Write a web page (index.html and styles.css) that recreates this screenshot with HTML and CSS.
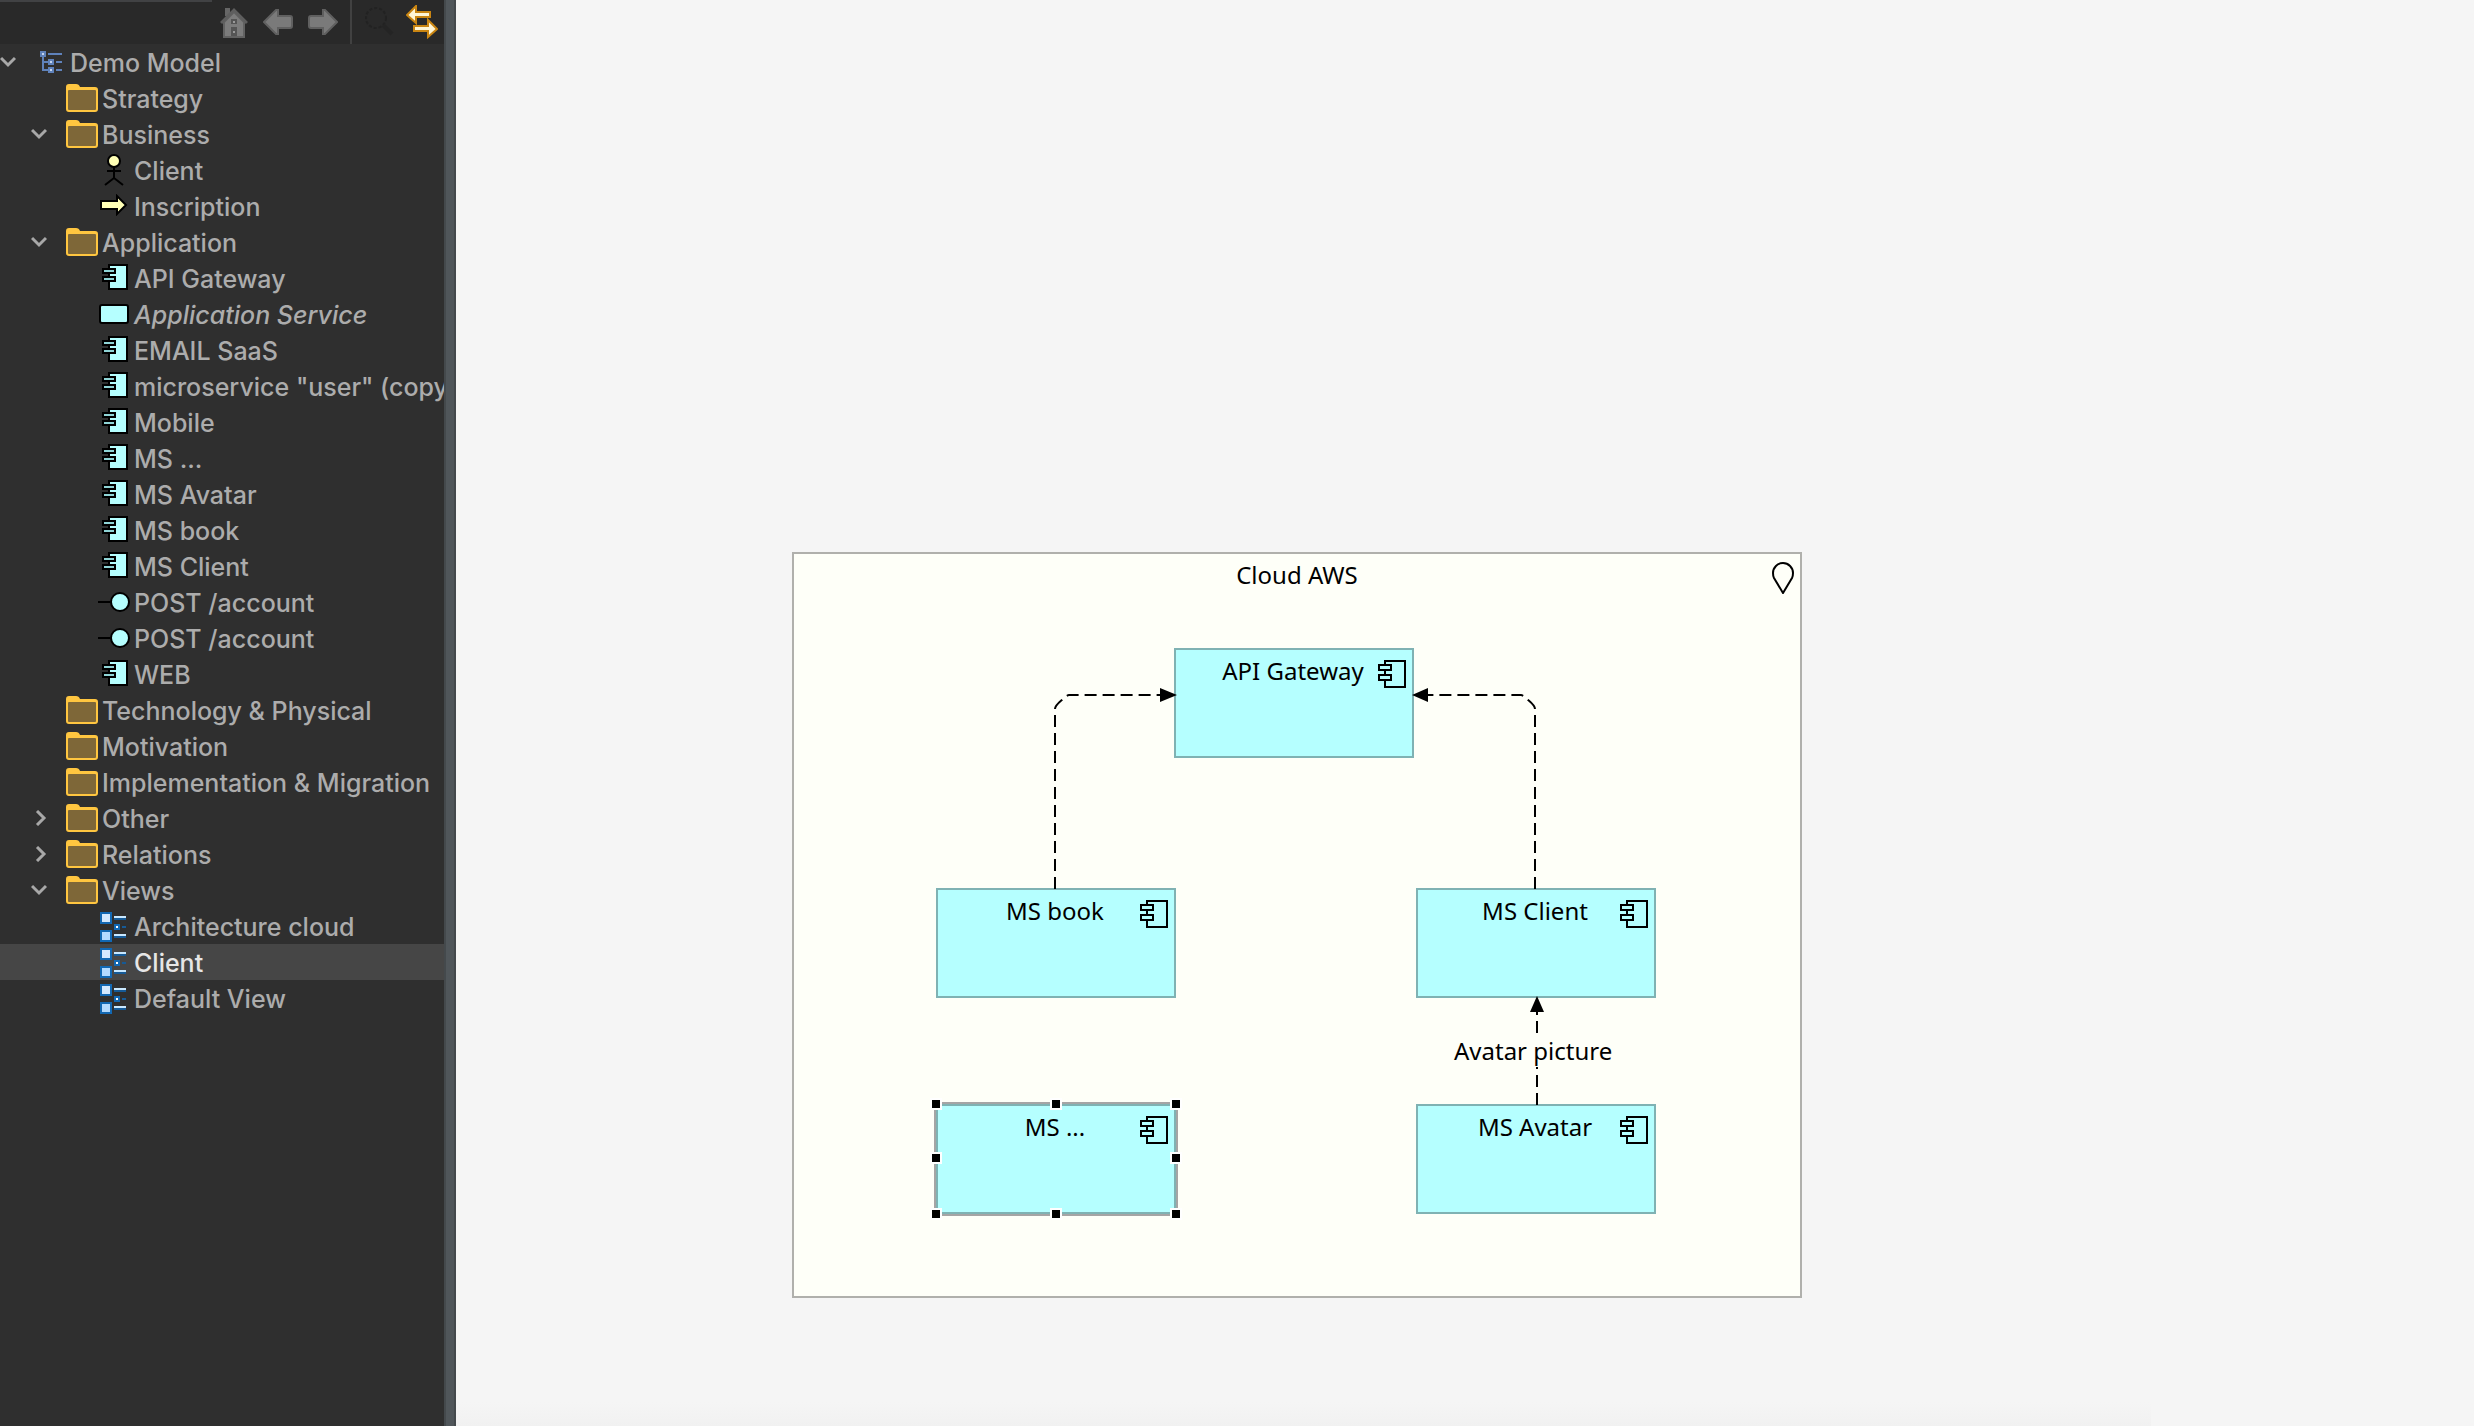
FILE: index.html
```html
<!DOCTYPE html>
<html lang="en">
<head>
<meta charset="utf-8">
<title>Demo Model</title>
<link rel="stylesheet" href="styles.css">
</head>
<body>
<svg class="defs" aria-hidden="true">
  <symbol id="folder" viewBox="0 0 32 28">
    <path d="M0 25V3q0-3 3-3h7q3 0 4 3h15q3 0 3 3v19q0 3-3 3H3q-3 0-3-3z" fill="#ffc640"/>
    <rect x="2" y="6" width="28" height="20" rx="1" fill="#7e6738"/>
  </symbol>
  <symbol id="component" viewBox="0 0 26 26">
    <rect x="7" y="1" width="18" height="24" fill="#b5ffff" stroke="#000" stroke-width="2"/>
    <rect x="1" y="5" width="12" height="4" fill="#8fd4d6" stroke="#000" stroke-width="2"/>
    <rect x="1" y="13" width="12" height="4" fill="#8fd4d6" stroke="#000" stroke-width="2"/>
  </symbol>
  <symbol id="service" viewBox="0 0 30 20">
    <rect x="1" y="1" width="28" height="18" rx="2" fill="#b5ffff" stroke="#000" stroke-width="2"/>
  </symbol>
  <symbol id="interface" viewBox="0 0 32 20">
    <path d="M0 10h12" stroke="#000" stroke-width="2"/>
    <circle cx="22" cy="10" r="9" fill="#b5ffff" stroke="#000" stroke-width="2"/>
  </symbol>
  <symbol id="actor" viewBox="0 0 20 32">
    <circle cx="10" cy="7" r="6" fill="#ffffb5" stroke="#000" stroke-width="2"/>
    <path d="M10 13v12M3 17h14M1 31l9-7 9 7" fill="none" stroke="#000" stroke-width="2"/>
  </symbol>
  <symbol id="process" viewBox="0 0 28 22">
    <path d="M1 7h16V2l9 9-9 9v-5H1z" fill="#ffffb5" stroke="#000" stroke-width="2"/>
  </symbol>
  <symbol id="view" viewBox="0 0 26 30">
    <rect x="1" y="1" width="10" height="10" fill="#d3e9ff" stroke="#1268b3" stroke-width="2"/>
    <rect x="1" y="19" width="10" height="10" fill="#b3daff" stroke="#1268b3" stroke-width="2"/>
    <path d="M14 5h12M14 23h12" stroke="#c8e8ff" stroke-width="2"/>
    <path d="M14 7h12M14 25h12M22 15h4" stroke="#165a96" stroke-width="2"/>
    <rect x="15" y="13" width="4" height="4" fill="#fff" stroke="#1268b3" stroke-width="2"/>
  </symbol>
  <symbol id="model" viewBox="0 0 22 22">
    <path d="M3 4v15h6M3 11h6M8 3h14M16 11h6M16 19h6" fill="none" stroke="#5f82bb" stroke-width="2"/>
    <rect x="1" y="1" width="4" height="4" fill="#c5d5ee" stroke="#5f82bb" stroke-width="2"/>
    <rect x="9" y="9" width="4" height="4" fill="#c5d5ee" stroke="#5f82bb" stroke-width="2"/>
    <rect x="9" y="17" width="4" height="4" fill="#c5d5ee" stroke="#5f82bb" stroke-width="2"/>
  </symbol>
  <symbol id="open" viewBox="0 0 16 16"><path d="M1 4l7 7 7-7" fill="none" stroke="#a8a8a8" stroke-width="3"/></symbol>
  <symbol id="closed" viewBox="0 0 16 16"><path d="M6 1l7 7-7 7" fill="none" stroke="#a8a8a8" stroke-width="3"/></symbol>
  <symbol id="node-component" viewBox="0 0 28 28">
    <path d="M7 5V1h20v26H7v-7M7 10v5M1 5h12v5H1zM1 15h12v5H1z" fill="none" stroke="#000" stroke-width="2"/>
  </symbol>
</svg>
<div class="app">
  <aside class="sidebar">
    <div class="toolbar">
      <div class="nav">
        <button class="tool" aria-label="Home"><svg width="28" height="32" viewBox="0 0 28 32"><path d="M5 2h5v8H5z" fill="#666"/><path d="M4 16v15h20V16L14 6z" fill="#7c7c7c" stroke="#626262" stroke-width="2"/><path d="M1 17L14 4l13 13" fill="none" stroke="#5e5e5e" stroke-width="3"/><path d="M11 13h6v5h-6zM11 21h6v9h-6z" fill="#555"/><path d="M13 15h2v2h-2zM13 25h2v2h-2z" fill="#999"/></svg></button>
        <button class="tool" aria-label="Back"><svg width="30" height="26" viewBox="0 0 30 26"><path d="M1 13L13 1h2v6h12q2 0 2 2v8q0 2-2 2H15v6h-2z" fill="#7a7a7a" stroke="#606060" stroke-width="2"/></svg></button>
        <button class="tool" aria-label="Forward"><svg width="30" height="26" viewBox="0 0 30 26"><path d="M29 13L17 1h-2v6H3Q1 7 1 9v8q0 2 2 2h12v6h2z" fill="#7a7a7a" stroke="#606060" stroke-width="2"/></svg></button>
      </div>
      <span class="separator"></span>
      <button class="tool" aria-label="Search"><svg width="30" height="32" viewBox="0 0 30 32"><circle cx="12" cy="12" r="10" fill="none" stroke="#222" stroke-width="2" stroke-dasharray="3 2"/><path d="M19 19l9 9" stroke="#242424" stroke-width="4"/></svg></button>
      <button class="tool" aria-label="Link with editor"><svg width="32" height="34" viewBox="0 0 32 34"><g fill="#fff6d6" stroke="#c98512" stroke-width="2"><path d="M1 10l9-9v6h14v5H10v6z"/><path d="M31 24l-9-9v6H8v5h14v6z"/></g></svg></button>
    </div>
    <ul class="tree">
      <li class="row root"><svg class="twist"><use href="#open"/></svg><svg class="icon model"><use href="#model"/></svg>Demo Model</li>
      <li class="row"><span class="twist"></span><svg class="icon folder"><use href="#folder"/></svg>Strategy</li>
      <li class="row"><svg class="twist"><use href="#open"/></svg><svg class="icon folder"><use href="#folder"/></svg>Business</li>
      <li class="row leaf"><svg class="icon"><use href="#actor"/></svg>Client</li>
      <li class="row leaf"><svg class="icon process"><use href="#process"/></svg>Inscription</li>
      <li class="row"><svg class="twist"><use href="#open"/></svg><svg class="icon folder"><use href="#folder"/></svg>Application</li>
      <li class="row leaf"><svg class="icon component"><use href="#component"/></svg>API Gateway</li>
      <li class="row leaf unused"><svg class="icon service"><use href="#service"/></svg>Application Service</li>
      <li class="row leaf"><svg class="icon component"><use href="#component"/></svg>EMAIL SaaS</li>
      <li class="row leaf"><svg class="icon component"><use href="#component"/></svg>microservice "user" (copy)</li>
      <li class="row leaf"><svg class="icon component"><use href="#component"/></svg>Mobile</li>
      <li class="row leaf"><svg class="icon component"><use href="#component"/></svg>MS ...</li>
      <li class="row leaf"><svg class="icon component"><use href="#component"/></svg>MS Avatar</li>
      <li class="row leaf"><svg class="icon component"><use href="#component"/></svg>MS book</li>
      <li class="row leaf"><svg class="icon component"><use href="#component"/></svg>MS Client</li>
      <li class="row leaf"><svg class="icon interface"><use href="#interface"/></svg>POST /account</li>
      <li class="row leaf"><svg class="icon interface"><use href="#interface"/></svg>POST /account</li>
      <li class="row leaf"><svg class="icon component"><use href="#component"/></svg>WEB</li>
      <li class="row"><span class="twist"></span><svg class="icon folder"><use href="#folder"/></svg>Technology &amp; Physical</li>
      <li class="row"><span class="twist"></span><svg class="icon folder"><use href="#folder"/></svg>Motivation</li>
      <li class="row"><span class="twist"></span><svg class="icon folder"><use href="#folder"/></svg>Implementation &amp; Migration</li>
      <li class="row"><svg class="twist"><use href="#closed"/></svg><svg class="icon folder"><use href="#folder"/></svg>Other</li>
      <li class="row"><svg class="twist"><use href="#closed"/></svg><svg class="icon folder"><use href="#folder"/></svg>Relations</li>
      <li class="row"><svg class="twist"><use href="#open"/></svg><svg class="icon folder"><use href="#folder"/></svg>Views</li>
      <li class="row leaf"><svg class="icon view"><use href="#view"/></svg>Architecture cloud</li>
      <li class="row leaf selected"><svg class="icon view"><use href="#view"/></svg>Client</li>
      <li class="row leaf"><svg class="icon view"><use href="#view"/></svg>Default View</li>
    </ul>
  </aside>
  <div class="sash"></div>
  <main class="canvas">
    <section class="group">
      <h2 class="group-title">Cloud AWS</h2>
      <svg class="pin" viewBox="0 0 22 32"><path d="M11 31L2 16Q1 14 1 11a10 10 0 0 1 20 0q0 3-1 5z" fill="none" stroke="#000" stroke-width="2"/></svg>
      <div class="node gateway">API Gateway<svg class="mark"><use href="#node-component"/></svg></div>
      <div class="node book">MS book<svg class="mark"><use href="#node-component"/></svg></div>
      <div class="node client">MS Client<svg class="mark"><use href="#node-component"/></svg></div>
      <div class="node avatar">MS Avatar<svg class="mark"><use href="#node-component"/></svg></div>
      <div class="node other">MS ...<svg class="mark"><use href="#node-component"/></svg>
        <i class="handle left top"></i><i class="handle center top"></i><i class="handle right top"></i>
        <i class="handle left middle"></i><i class="handle right middle"></i>
        <i class="handle left bottom"></i><i class="handle center bottom"></i><i class="handle right bottom"></i>
      </div>
      <svg class="links" viewBox="794 554 1006 742">
        <g fill="none" stroke="#000" stroke-width="2" stroke-dasharray="12 6">
          <path d="M1055 889V709C1055 705 1061 701 1063 699Q1067 695 1069 695H1164"/>
          <path d="M1535 889V709C1535 705 1529 701 1527 699Q1523 695 1521 695H1424"/>
          <path d="M1537 1105V1008"/>
        </g>
        <path d="M1177 695l-17-7v14zM1412 695l16-7v14zM1537 996l-7 16h14z"/>
      </svg>
      <span class="link-label">Avatar picture</span>
    </section>
  </main>
</div>
</body>
</html>
```

FILE: styles.css
```css
* { box-sizing: border-box; }
body { margin: 0; background: #f5f5f5; }
.defs { display: none; }
.app { display: flex; min-height: 100vh; }

.sidebar {
  flex: 0 0 444px;
  overflow: hidden;
  background: #2f2f2f;
  color: #acacac;
  font: 500 25px/36px Inter, sans-serif;
}
.toolbar {
  display: flex;
  align-items: center;
  justify-content: flex-end;
  gap: 12px;
  height: 44px;
  padding-right: 6px;
  background: linear-gradient(#414244, #414244) 0 0 / 212px 2px no-repeat #292929;
}
.nav { display: flex; align-items: center; gap: 15px; }
.tool { display: flex; padding: 0; border: 0; background: none; }
.separator { width: 2px; height: 44px; background: #414141; }

.tree { margin: 0; padding: 0; list-style: none; }
.row {
  display: flex;
  align-items: center;
  height: 36px;
  padding: 2px 0 0 31px;
  white-space: nowrap;
}
.root { padding-left: 0; }
.leaf { padding-left: 98px; }
.selected { background: #464646; color: #e6e6e6; }
.unused { font-style: italic; }
.twist { flex: none; width: 16px; height: 16px; margin: 0 19px 2px 0; }
.icon { flex: none; width: 32px; height: 32px; margin: 0 4px 2px 0; }
.folder { height: 28px; }
.model { width: 22px; height: 22px; margin: 0 8px 2px 5px; }
.component { width: 26px; height: 26px; margin: 0 6px 4px 4px; }
.service { width: 30px; height: 20px; margin: 0 5px 2px 1px; }
.interface { height: 20px; }
.view { width: 26px; height: 30px; margin: 0 8px 0 2px; }
.process { width: 28px; height: 22px; margin: 0 6px 4px 2px; }

.sash {
  flex: 0 0 12px;
  background: #50565a;
  border: solid #44494c;
  border-width: 0 2px;
}

.canvas {
  flex: 1;
  padding: 552px 0 128px 336px;
  background: linear-gradient(#f5f5f5, #f1f1f1) 0 100% / 84% 24px no-repeat #f5f5f5;
  font: 24px/32px "Noto Sans", sans-serif;
  color: #000;
}
.group {
  position: relative;
  width: 1010px;
  height: 746px;
  border: 2px solid #b0b0ac;
  background: #fefff8;
}
.group-title { margin: 0; padding-top: 5px; font: inherit; text-align: center; }
.pin { position: absolute; top: 8px; right: 6px; width: 22px; height: 32px; }
.node {
  position: absolute;
  width: 240px;
  height: 110px;
  padding: 5px 2px 0 0;
  border: 2px solid #7fb2b3;
  background: #b5ffff;
  text-align: center;
}
.mark { position: absolute; top: 10px; right: 6px; width: 28px; height: 28px; }
.gateway { left: 380px; top: 94px; }
.book { left: 142px; top: 334px; }
.client { left: 622px; top: 334px; }
.avatar { left: 622px; top: 550px; }
.other { left: 142px; top: 550px; outline: 2px solid #a5a5a5; }
.handle {
  position: absolute;
  width: 12px;
  height: 12px;
  border: 2px solid #fff;
  background: #000;
}
.left { left: -8px; }
.center { left: 112px; }
.right { right: -8px; }
.top { top: -8px; }
.middle { top: 46px; }
.bottom { bottom: -8px; }
.links { position: absolute; inset: 0; width: 1006px; height: 742px; }
.link-label {
  position: absolute;
  left: 660px;
  top: 481px;
  background: #fefff8;
}
```
